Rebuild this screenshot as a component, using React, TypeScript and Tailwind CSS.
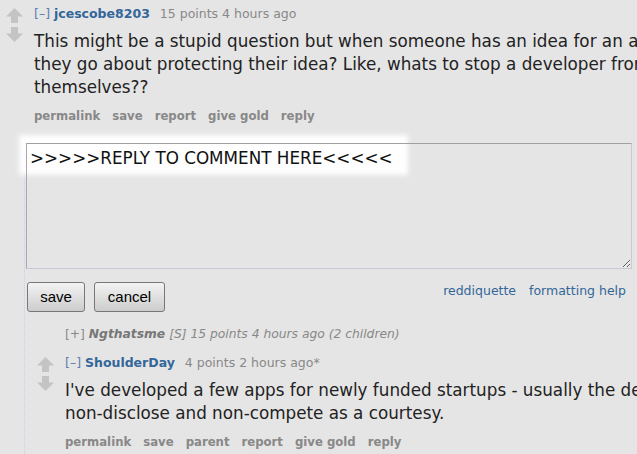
import React from 'react'

const font = { fontFamily: '"DejaVu Sans", Verdana, sans-serif' }

function Arrow({ down = false }: { down?: boolean }) {
  return (
    <svg width="17" height="15" viewBox="0 0 17 15" className={down ? 'rotate-180' : ''}>
      <polygon points="8.5,0 17,8.5 12,8.5 12,15 5,15 5,8.5 0,8.5" fill="#c4c4c4" />
    </svg>
  )
}

function Votes() {
  return (
    <div className="flex flex-col gap-[4px] pt-[2px]">
      <Arrow />
      <Arrow down />
    </div>
  )
}

function Tagline({ author, points, time }: { author: string; points: string; time: string }) {
  return (
    <div className="text-[12.5px] leading-[16px] whitespace-nowrap">
      <span className="text-[#5a7fb0]">[–]</span>{' '}
      <span className="font-bold text-[#336699]">{author}</span>
      <span className="text-[#888] ml-[10px]">
        {points} {time}
      </span>
    </div>
  )
}

function Actions({ items }: { items: string[] }) {
  return (
    <div className="flex gap-[12px] text-[11.7px] leading-[16px] font-bold text-[#888] mt-[9px]">
      {items.map((item) => (
        <span key={item}>{item}</span>
      ))}
    </div>
  )
}

function Body({ lines }: { lines: string[] }) {
  return (
    <div className="mt-[8px] text-[16.8px] leading-[23px] text-[#222] whitespace-nowrap">
      {lines.map((line) => (
        <div key={line}>{line}</div>
      ))}
    </div>
  )
}

export default function App() {
  return (
    <div className="w-[637px] h-[454px] overflow-hidden bg-[#e5e5e5]" style={font}>
      {/* parent comment */}
      <div className="flex pt-[6px]">
        <div className="w-[34px] pl-[6px] shrink-0">
          <Votes />
        </div>
        <div>
          <Tagline author="jcescobe8203" points="15 points" time="4 hours ago" />
          <Body
            lines={[
              'This might be a stupid question but when someone has an idea for an app, how do',
              'they go about protecting their idea? Like, whats to stop a developer from doing it',
              'themselves??',
            ]}
          />
          <Actions items={['permalink', 'save', 'report', 'give gold', 'reply']} />
        </div>
      </div>

      {/* children */}
      <div className="ml-[24px] mt-[14px] border-l border-dotted border-[#ccccee] pb-[40px]">
        {/* reply form */}
        <div className="relative pt-[5px] pl-[1px]">
          <div className="absolute left-[-2px] top-[1px] w-[381px] h-[32px] bg-white/95 shadow-[0_0_5px_4px_rgba(255,255,255,0.95)]" />
          <textarea
            defaultValue=">>>>>REPLY TO COMMENT HERE<<<<<"
            className="relative block w-[606px] h-[126px] bg-transparent border border-[#c9c9d6] border-t-[#a0a0a0] border-l-[#a8a8b0] px-[3px] pt-[4px] text-[16.8px] leading-[20px] text-[#111] resize outline-none"
            style={font}
          />
          <div className="flex justify-between items-start mt-[13px] w-[606px]">
            <div className="flex gap-[9px] pl-[1px]">
              <button className="w-[58px] h-[30px] rounded-[3px] border border-[#777] bg-gradient-to-b from-[#f3f3f3] to-[#cdcdcd] text-[15px] text-black" style={{ fontFamily: '"Liberation Sans", Arial, sans-serif' }}>
                save
              </button>
              <button className="w-[71px] h-[30px] rounded-[3px] border border-[#777] bg-gradient-to-b from-[#f3f3f3] to-[#cdcdcd] text-[15px] text-black" style={{ fontFamily: '"Liberation Sans", Arial, sans-serif' }}>
                cancel
              </button>
            </div>
            <div className="flex gap-[13px] pr-[6px] pt-[1px] text-[12.5px] leading-[16px] text-[#336699]">
              <span>reddiquette</span>
              <span>formatting help</span>
            </div>
          </div>
        </div>

        {/* collapsed comment */}
        <div className="mt-[14px] pl-[40px] text-[12.3px] leading-[16px] text-[#888] whitespace-nowrap">
          <span>[+]</span> <span className="font-bold italic text-[#777]">Ngthatsme</span>{' '}
          <span className="italic">[S] 15 points 4 hours ago (2 children)</span>
        </div>

        {/* nested comment */}
        <div className="flex mt-[13px] pl-[12px]">
          <div className="w-[28px] shrink-0">
            <Votes />
          </div>
          <div>
            <Tagline author="ShoulderDay" points="4 points" time="2 hours ago*" />
            <Body
              lines={[
                "I've developed a few apps for newly funded startups - usually the devs sign a",
                'non-disclose and non-compete as a courtesy.',
              ]}
            />
            <Actions items={['permalink', 'save', 'parent', 'report', 'give gold', 'reply']} />
          </div>
        </div>
      </div>
    </div>
  )
}
